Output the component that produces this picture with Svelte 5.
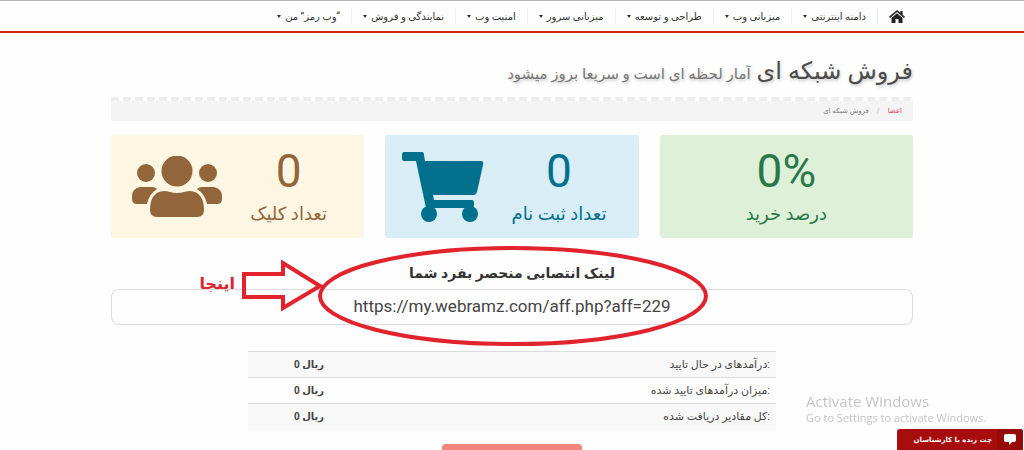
<script lang="ts">
	const menu = [
		'دامنه اینترنتی',
		'میزبانی وب',
		'طراحی و توسعه',
		'میزبانی سرور',
		'امنیت وب',
		'نمایندگی و فروش',
		'“وب رمز” من'
	];

	const stats = [
		{ value: '0%', label: 'درصد خرید', kind: 'success', icon: '' },
		{ value: '0', label: 'تعداد ثبت نام', kind: 'info', icon: 'cart' },
		{ value: '0', label: 'تعداد کلیک', kind: 'warning', icon: 'users' }
	];

	const earnings = [
		{ label: 'درآمدهای در حال تایید:', amount: 'ریال 0' },
		{ label: 'میزان درآمدهای تایید شده:', amount: 'ریال 0' },
		{ label: 'کل مقادیر دریافت شده:', amount: 'ریال 0' }
	];

	let link = $state('https://my.webramz.com/aff.php?aff=229');
</script>

<div class="page" dir="rtl">
	<header>
		<nav class="container">
			<a class="home" href="#home" aria-label="خانه">
				<svg viewBox="0 0 16 13" width="16" height="13">
					<path d="M8 0 0 6.7l1 1.2 7-5.8 7 5.8 1-1.2-2.4-2V1h-2.2v1.8z" />
					<path d="M8 3.3 2.5 7.9V13h4V9h3v4h4V7.9z" />
				</svg>
			</a>
			{#each menu as item}
				<a class="item" href="#menu">{item}<span class="caret"></span></a>
			{/each}
		</nav>
	</header>

	<main class="container">
		<h1>فروش شبکه ای <small>آمار لحظه ای است و سریعا بروز میشود</small></h1>

		<div class="breadcrumb">
			<a href="#members">اعضا</a>
			<span class="slash">/</span>
			<span>فروش شبکه ای</span>
		</div>

		<section class="stats">
			{#each stats as stat}
				<div class="card {stat.kind}">
					<div class="figure">
						<strong dir="ltr">{stat.value}</strong>
						<span>{stat.label}</span>
					</div>
					{#if stat.icon === 'cart'}
						<svg viewBox="0 0 82 70" width="82" height="70">
							<path
								d="M2 0h18q2 0 2 3l1 6h56q3 0 2 4l-6 27q-1 3-4 3H31l1 5h38q2 0 2 3v2q0 3-3 3H24L14 9H3Q0 9 0 7V3q0-3 2-3z"
							/>
							<circle cx="27" cy="62" r="8" />
							<circle cx="68" cy="62" r="8" />
						</svg>
					{:else if stat.icon === 'users'}
						<svg viewBox="0 0 90 61" width="90" height="61">
							<circle cx="14" cy="17" r="9" />
							<circle cx="76" cy="17" r="9" />
							<circle cx="45" cy="15" r="15.5" />
							<path d="M8 31h12q3 0 5 2-8 5-10 15H5q-5 0-5-5v-3q0-7 8-9z" />
							<path d="M82 31H70q-3 0-5 2 8 5 10 15h10q5 0 5-5v-3q0-7-8-9z" />
							<path
								d="M32 35q3 0 6 1 7 2 14 0 3-1 6-1 7 0 11 6 3 5 3 13 0 7-7 7H25q-7 0-7-7 0-8 3-13 4-6 11-6z"
							/>
						</svg>
					{/if}
				</div>
			{/each}
		</section>

		<section class="referral">
			<label for="link">لینک انتصابی منحصر بفرد شما</label>
			<input id="link" type="text" dir="ltr" readonly bind:value={link} />
			<div class="marker">
				<span>اینجا</span>
				<svg viewBox="0 0 468 104" width="468" height="104">
					<path d="M3 30H42V19L79 42 42 64V53H3z" />
					<ellipse cx="272" cy="52" rx="193" ry="48" />
				</svg>
			</div>
		</section>

		<table>
			<tbody>
				{#each earnings as row}
					<tr>
						<th scope="row" dir="ltr">{row.label}</th>
						<td>{row.amount}</td>
					</tr>
				{/each}
			</tbody>
		</table>

		<button class="withdraw" type="button" aria-label="برداشت"></button>
	</main>

	<div class="activate" dir="ltr">
		<p>Activate Windows</p>
		<small>Go to Settings to activate Windows.</small>
	</div>

	<button class="chat" type="button">
		<span class="bubble">
			<svg viewBox="0 0 12 11" width="12" height="11">
				<path d="M2 0h8q2 0 2 2v4q0 2-2 2H8l-3 3V8H2Q0 8 0 6V2q0-2 2-2z" />
			</svg>
		</span>
		<span class="chat-text">چت زنده با کارشناسان</span>
	</button>
</div>

<style>
	:global(body) {
		margin: 0;
		background: #fefefe;
	}
	.page {
		height: 100vh;
		overflow: hidden;
		box-sizing: border-box;
		border-top: 1px solid #b5b3b3;
		font-family: Roboto, 'DejaVu Sans', sans-serif;
		color: #444;
	}
	.container {
		width: 802px;
		max-width: 90%;
		margin: 0 auto;
	}
	header {
		border-bottom: 2px solid #d4201f;
	}
	nav {
		display: flex;
		align-items: center;
		height: 30px;
	}
	nav a {
		display: flex;
		align-items: center;
		height: 16px;
		color: #333;
		text-decoration: none;
		white-space: nowrap;
	}
	.home {
		padding: 0 8px 0 11px;
	}
	.home svg {
		fill: #222;
	}
	.item {
		gap: 4px;
		padding: 0 11px;
		border-right: 1px solid #eee;
		font-size: 10px;
	}
	.caret {
		border: 2px solid transparent;
		border-top: 3px solid #333;
		border-bottom: 0;
	}
	h1 {
		margin: 20px 0 5px;
		font-size: 24px;
		font-weight: 400;
		line-height: 36px;
		color: #4c4c4c;
		text-shadow: 1px 2px 3px #ccc;
		white-space: nowrap;
	}
	h1 small {
		font-size: 15px;
		color: #777;
	}
	.breadcrumb {
		display: flex;
		align-items: center;
		gap: 8px;
		height: 20px;
		padding: 0 11px;
		border-top: 4px dashed #eee;
		background: #f5f4f5;
		background-clip: padding-box;
		border-radius: 2px;
		font-size: 7px;
		color: #777;
	}
	.breadcrumb a {
		color: #dc3b3b;
		text-decoration: none;
	}
	.slash {
		color: #bbb;
	}
	.stats {
		display: grid;
		grid-template-columns: repeat(3, 1fr);
		gap: 21px;
		margin-top: 14px;
	}
	.card {
		display: flex;
		align-items: center;
		justify-content: center;
		gap: 28px;
		height: 103px;
		border-radius: 3px;
		fill: currentColor;
	}
	.success {
		background: #dff0d8;
		color: #28784a;
	}
	.info {
		background: #d8edf6;
		color: #00708c;
	}
	.warning {
		background: #fdf6e2;
		color: #92663a;
	}
	.info,
	.warning {
		padding-right: 16px;
	}
	.figure {
		display: flex;
		flex-direction: column;
		align-items: center;
		white-space: nowrap;
	}
	.figure strong {
		font-size: 46px;
		font-weight: 400;
		line-height: 54px;
	}
	.figure span {
		font-size: 18px;
		line-height: 32px;
	}
	.referral {
		position: relative;
		margin-top: 20px;
	}
	.referral label {
		display: block;
		font-size: 14px;
		font-weight: 700;
		line-height: 31px;
		color: #333;
		text-align: center;
	}
	.referral input {
		display: block;
		box-sizing: border-box;
		width: 100%;
		height: 36px;
		padding-bottom: 4px;
		border: 1px solid #dcdadf;
		border-radius: 8px;
		background: #fefefe;
		font: 17px Roboto, sans-serif;
		color: #444;
		text-align: center;
	}
	.marker {
		position: absolute;
		top: -14px;
		right: 204px;
		display: flex;
		align-items: center;
		gap: 6px;
		direction: ltr;
		color: #e0232c;
		font-size: 16px;
		font-weight: 700;
		pointer-events: none;
	}
	.marker span {
		padding-bottom: 26px;
	}
	.marker svg {
		fill: none;
		stroke: currentColor;
		stroke-width: 4;
	}
	table {
		width: 528px;
		margin: 26px auto 14px;
		border-collapse: collapse;
		font-size: 11px;
	}
	tr {
		height: 26px;
		border-top: 1px solid #dcdcdc;
	}
	tr:nth-child(odd) {
		background: #f9f8f9;
	}
	th,
	td {
		padding: 0 6px;
	}
	th {
		font-weight: 400;
		text-align: right;
	}
	td {
		width: 110px;
		font-size: 10px;
		font-weight: 700;
		text-align: center;
	}
	.withdraw {
		display: block;
		width: 140px;
		height: 34px;
		margin: 0 auto;
		border: 0;
		border-radius: 4px;
		background: #f4857d;
	}
	.activate {
		position: fixed;
		right: 33px;
		bottom: 24px;
		width: 185px;
		font-family: 'Open Sans', sans-serif;
		color: #c4c4c6;
		white-space: nowrap;
	}
	.activate p {
		margin: 0;
		font-size: 15px;
		line-height: 18px;
	}
	.activate small {
		display: block;
		font-size: 11px;
		line-height: 16px;
	}
	.chat {
		position: fixed;
		right: 1px;
		bottom: 0;
		display: flex;
		align-items: center;
		width: 126px;
		height: 21px;
		padding: 0;
		border: 0;
		border-radius: 3px 3px 0 0;
		background: #a80d0d;
		color: #fff;
		font: 700 7px 'DejaVu Sans', sans-serif;
		overflow: hidden;
	}
	.bubble {
		display: flex;
		align-items: center;
		justify-content: center;
		width: 26px;
		height: 100%;
		background: #970b0b;
		fill: #fff;
	}
	.chat-text {
		padding-right: 5px;
		white-space: nowrap;
	}
</style>
